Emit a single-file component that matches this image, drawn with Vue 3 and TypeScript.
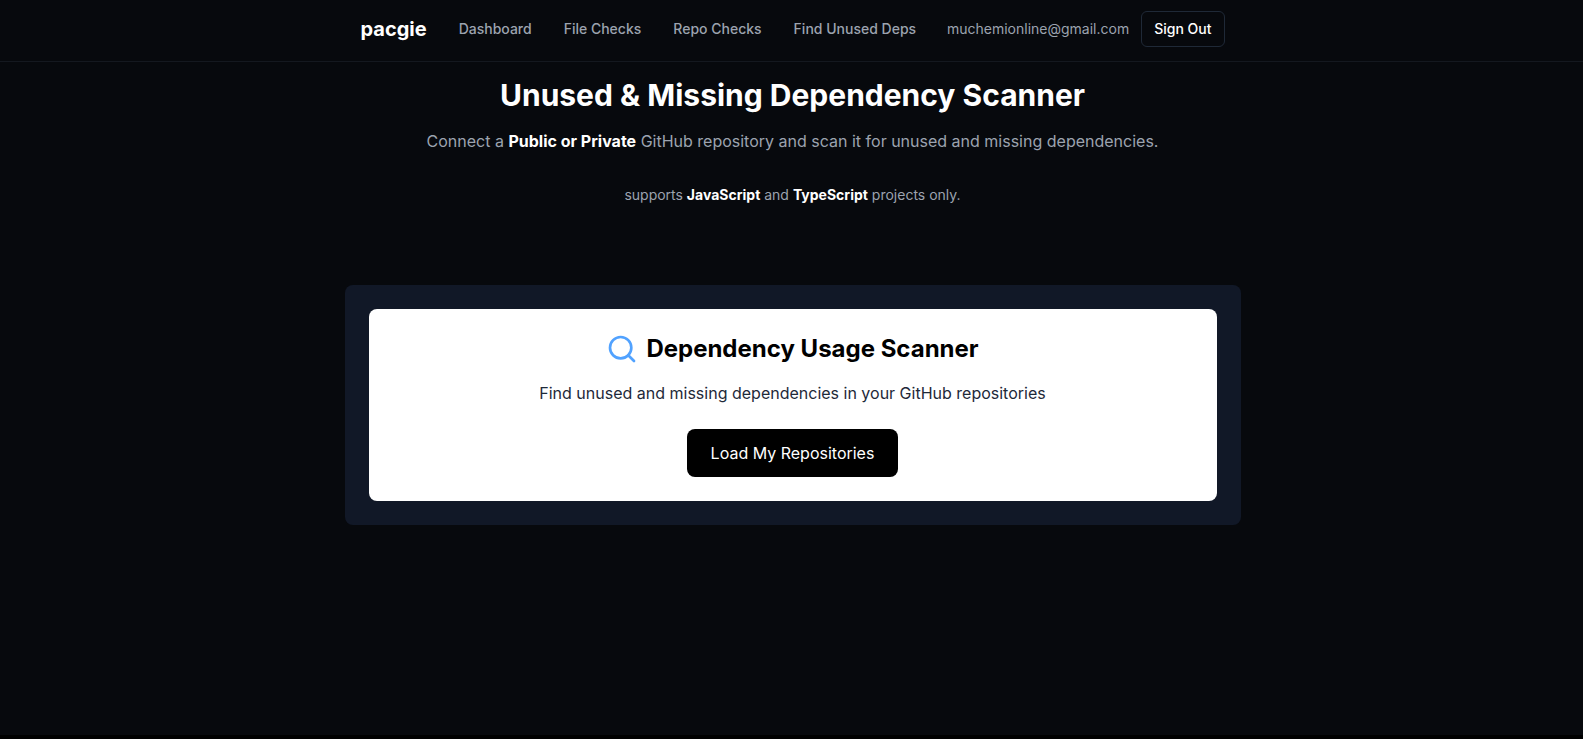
<script setup lang="ts">
interface NavLink {
  label: string
  href: string
}

const links: NavLink[] = [
  { label: 'Dashboard', href: '#dashboard' },
  { label: 'File Checks', href: '#file-checks' },
  { label: 'Repo Checks', href: '#repo-checks' },
  { label: 'Find Unused Deps', href: '#unused' },
]
</script>

<template>
  <div class="page">
    <header class="bar">
      <div class="bar-inner">
        <nav class="nav">
          <a class="brand" href="#home">pacgie</a>
          <a v-for="link in links" :key="link.href" class="link" :href="link.href">{{ link.label }}</a>
        </nav>
        <div class="account">
          <span class="email">muchemionline@gmail.com</span>
          <button class="sign-out" type="button">Sign Out</button>
        </div>
      </div>
    </header>
    <main class="main">
      <div class="content">
        <section class="intro">
          <h1>Unused &amp; Missing Dependency Scanner</h1>
          <p class="lead">
            Connect a <strong>Public or Private</strong> GitHub repository and scan it for unused and missing dependencies.
          </p>
          <p class="note">supports <strong>JavaScript</strong> and <strong>TypeScript</strong> projects only.</p>
        </section>
        <section class="panel">
          <div class="card">
            <h2>
              <svg class="icon" viewBox="0 0 24 24" fill="none" stroke="currentColor" stroke-width="2" stroke-linecap="round" stroke-linejoin="round" aria-hidden="true">
                <circle cx="11" cy="11" r="8" />
                <path d="m21 21-4.3-4.3" />
              </svg>
              Dependency Usage Scanner
            </h2>
            <p class="card-text">Find unused and missing dependencies in your GitHub repositories</p>
            <button class="load" type="button">Load My Repositories</button>
          </div>
        </section>
      </div>
    </main>
  </div>
</template>

<style>
body {
  margin: 0;
  background: #000;
}
</style>

<style scoped>
.page {
  min-height: calc(100vh - 4px);
  background: #07090d;
  color: #fff;
  font-family: Inter, "Liberation Sans", sans-serif;
  font-size: 16px;
  line-height: 24px;
}
.bar,
.main {
  padding-left: 2px;
}
.bar {
  border-bottom: 1px solid #14181f;
}
.bar-inner {
  box-sizing: border-box;
  max-width: 896px;
  height: 61px;
  margin: 0 auto;
  padding: 0 16px 4px;
  display: flex;
  align-items: center;
  justify-content: space-between;
}
.nav {
  display: flex;
  align-items: center;
  gap: 32px;
}
a {
  text-decoration: none;
}
.brand {
  color: #fff;
  font-size: 20px;
  line-height: 28px;
  font-weight: 700;
}
.link,
.email,
.sign-out {
  font-size: 14px;
  line-height: 20px;
}
.link {
  color: #9ca3af;
  font-weight: 500;
}
.account {
  display: flex;
  align-items: center;
  gap: 12px;
}
.email {
  color: #9ca3af;
}
button {
  font-family: inherit;
  cursor: pointer;
}
.sign-out {
  box-sizing: border-box;
  height: 36px;
  padding: 0 12px;
  border: 1px solid #1f2937;
  border-radius: 6px;
  background: transparent;
  color: #fff;
  font-weight: 500;
}
.content {
  max-width: 896px;
  margin: 0 auto;
}
.intro {
  padding-top: 15px;
  text-align: center;
}
h1,
h2,
p {
  margin: 0;
}
h1 {
  font-size: 30px;
  line-height: 36px;
  font-weight: 700;
}
.lead {
  margin-top: 16px;
  color: #9ca3af;
}
.note {
  margin-top: 32px;
  color: #9ca3af;
  font-size: 14px;
  line-height: 20px;
}
strong {
  color: #fff;
  font-weight: 700;
}
.panel {
  margin-top: 80px;
  padding: 24px;
  border-radius: 8px;
  background: #111827;
}
.card {
  padding: 24px;
  border-radius: 8px;
  background: #fff;
  text-align: center;
}
h2 {
  display: flex;
  align-items: center;
  justify-content: center;
  gap: 8px;
  color: #000;
  font-size: 24px;
  line-height: 32px;
  font-weight: 700;
}
.icon {
  width: 32px;
  height: 32px;
  color: #51a2ff;
}
.card-text {
  margin-top: 16px;
  color: #1e2939;
}
.load {
  margin-top: 24px;
  padding: 12px 24px;
  border: 0;
  border-radius: 8px;
  background: #000;
  color: #fff;
  font-size: 16px;
  line-height: 24px;
}
</style>
